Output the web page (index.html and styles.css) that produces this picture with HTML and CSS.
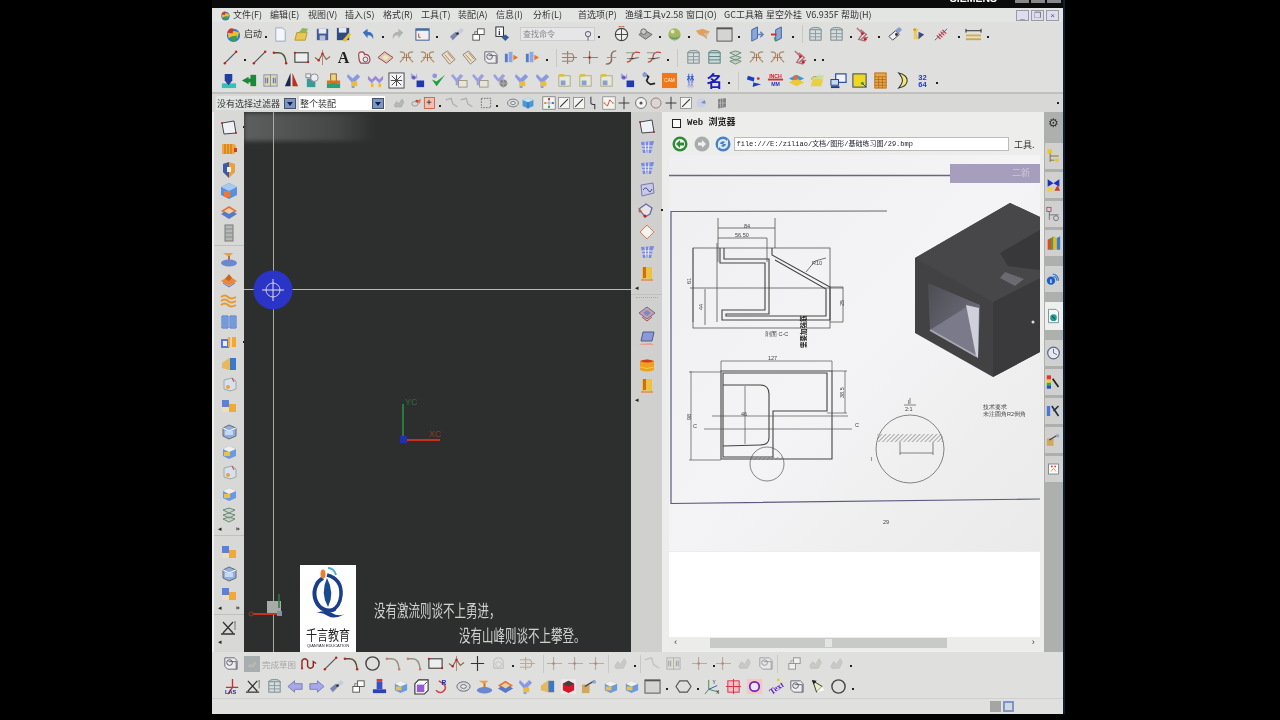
FILE: index.html
```html
<!DOCTYPE html>
<html lang="zh">
<head>
<meta charset="utf-8">
<title>NX</title>
<link rel="stylesheet" href="styles.css">
</head>
<body>
<svg class="defs" xmlns="http://www.w3.org/2000/svg">
<symbol id="nx" viewBox="0 0 18 18"><circle cx="9" cy="10" r="7" fill="#3a78c8"/><path d="M3 8Q8 3 15 7L13 13Q8 9 4 13Z" fill="#e8c030"/><path d="M2 7Q5 1 9 3L8 8Z" fill="#d03828"/><path d="M7 11L13 10 11 16 6 15Z" fill="#40a040"/></symbol>
<symbol id="new" viewBox="0 0 18 18"><path d="M4 2H11L14 5V16H4Z" fill="#f4f6fa" stroke="#9aa8c0"/></symbol>
<symbol id="open" viewBox="0 0 18 18"><path d="M2 15L4 7H15L13 15Z" fill="#e8c850" stroke="#b89830"/><path d="M6 7L10 2 16 3 14 7Z" fill="#8ab860"/></symbol>
<symbol id="save" viewBox="0 0 18 18"><rect x="3" y="3" width="12" height="12" fill="#3f5a9a"/><rect x="5" y="3" width="8" height="5" fill="#e8eaf0"/><rect x="6" y="10" width="6" height="5" fill="#b8c0d0"/></symbol>
<symbol id="saveas" viewBox="0 0 18 18"><rect x="2" y="2" width="13" height="13" fill="#2f4a80"/><rect x="4" y="2" width="8" height="5" fill="#e8eaf0"/><path d="M8 15L15 7 17 9 11 17Z" fill="#e8c030"/></symbol>
<symbol id="undo" viewBox="0 0 18 18"><path d="M3 7L8 3V6Q15 6 14 14Q12 9 8 10V13Z" fill="#3a70c0"/></symbol>
<symbol id="redo" viewBox="0 0 18 18"><path d="M15 7L10 3V6Q3 6 4 14Q6 9 10 10V13Z" fill="#b0b4b0"/></symbol>
<symbol id="win" viewBox="0 0 18 18"><rect x="2" y="3" width="14" height="12" fill="#f0f0f0" stroke="#3a5a90"/><rect x="2" y="3" width="14" height="2" fill="#3a6ab0"/><path d="M5 8V12H7" stroke="#c84020" fill="none"/></symbol>
<symbol id="link" viewBox="0 0 18 18"><path d="M1 11L7 6 10 9 4 15Z" fill="#7888b0"/><path d="M8 6L13 2 16 5 11 9Z" fill="#c8cce0"/><circle cx="9" cy="8" r="1.500" fill="#333"/></symbol>
<symbol id="copies" viewBox="0 0 18 18"><rect x="8" y="3" width="7" height="6" fill="#fff" stroke="#555"/><rect x="3" y="9" width="7" height="6" fill="#fff" stroke="#555"/><path d="M5 9V6H8" stroke="#777" fill="none"/></symbol>
<symbol id="info" viewBox="0 0 18 18"><rect x="2" y="1" width="8" height="10" fill="#fff" stroke="#223"/><text x="4.500" y="9" font-size="8" font-weight="700" fill="#123" font-family="Liberation Serif">i</text><path d="M8 12L12 9 16 12 12 16Z" fill="#3a5a98"/></symbol>
<symbol id="cplus" viewBox="0 0 18 18"><circle cx="9" cy="9" r="6.500" fill="#eee" stroke="#444" stroke-width="1.200"/><path d="M9 3V15M3 9H15" stroke="#444"/><path d="M6 1L9 0 12 1" stroke="#c43" fill="none"/></symbol>
<symbol id="disk" viewBox="0 0 18 18"><path d="M2 9L9 5 16 9 9 14Z" fill="#a8a8a8" stroke="#666"/><circle cx="7" cy="6" r="3" fill="#c8c8c8" stroke="#666"/></symbol>
<symbol id="ball" viewBox="0 0 18 18"><circle cx="9" cy="9" r="6.500" fill="#a8b860"/><path d="M3 10Q9 15 15 10A6.500 6.500 0 0 1 3 10Z" fill="#5a9a78"/><circle cx="7" cy="6" r="2" fill="#e6e8c0"/></symbol>
<symbol id="flag" viewBox="0 0 18 18"><path d="M1 5L8 3 16 6 12 9 13 14 9 11 4 9Z" fill="#e0a060"/><path d="M9 8L15 7 12 12Z" fill="#c8c0a8"/></symbol>
<symbol id="box" viewBox="0 0 18 18"><rect x="1" y="2" width="16" height="14" fill="#d4d4d2" stroke="#555"/><rect x="1" y="2" width="16" height="1.500" fill="#555"/></symbol>
<symbol id="door" viewBox="0 0 18 18"><path d="M4 4L10 1V13L4 16Z" fill="#88a8d8" stroke="#4060a0"/><path d="M10 9L16 9M13 6L16 9 13 12" stroke="#6080b8" stroke-width="1.500" fill="none"/></symbol>
<symbol id="door2" viewBox="0 0 18 18"><path d="M6 4L12 1V13L6 16Z" fill="#88a8d8" stroke="#4060a0"/><path d="M1 9L7 9" stroke="#c83030" stroke-width="2"/><path d="M5 12L6 16" stroke="#30a050" stroke-width="2"/></symbol>
<symbol id="stack" viewBox="0 0 18 18"><ellipse cx="9" cy="4" rx="6" ry="2.500" fill="#c8d0d0" stroke="#7a8a90"/><rect x="3" y="4" width="12" height="11" fill="#d8dcdc" stroke="#7a8a90"/><path d="M3 8H15M3 11.500H15M9 4V15" stroke="#8a9aa0"/></symbol>
<symbol id="stack2" viewBox="0 0 18 18"><ellipse cx="9" cy="4" rx="6" ry="2.500" fill="#b8ccc8" stroke="#5a8080"/><rect x="3" y="4" width="12" height="11" fill="#c8dcd8" stroke="#5a8080"/><path d="M3 8H15M3 11.500H15" stroke="#5a8080"/></symbol>
<symbol id="wave" viewBox="0 0 18 18"><path d="M3 4L9 2 15 4 9 7ZM3 9L9 7 15 9 9 12ZM3 13L9 11 15 13 9 16Z" fill="#c8d4c8" stroke="#6a8a78"/></symbol>
<symbol id="redg" viewBox="0 0 18 18"><path d="M3 2L9 8 5 14 12 16M7 4L13 9 9 13 15 12" stroke="#b0707a" stroke-width="1.500" fill="none"/><circle cx="9" cy="8" r="1.500" fill="#c02030"/><circle cx="12" cy="14" r="1.500" fill="#c02030"/></symbol>
<symbol id="dia" viewBox="0 0 18 18"><path d="M2 11L9 5 13 9 6 15Z" fill="#f0f0f0" stroke="#445"/><path d="M9 4L13 1 16 4 12 8Z" fill="#88a0d8"/><circle cx="10" cy="9" r="1.500" fill="#333"/></symbol>
<symbol id="gold" viewBox="0 0 18 18"><path d="M4 3H9L7 8 10 14H4Z" fill="#e8cc60"/><path d="M9 6L15 9 9 14Z" fill="#3a4a88"/><circle cx="5" cy="4" r="1.500" fill="#d0a020"/></symbol>
<symbol id="spring" viewBox="0 0 18 18"><path d="M2 15L15 3" stroke="#5060a0"/><path d="M4 10L8 14M6 8L10 12M8 6L12 10M10 4L14 8" stroke="#c83040" stroke-width="1.200"/></symbol>
<symbol id="meas" viewBox="0 0 18 18"><path d="M1 5H17M1 3V7M17 3V7" stroke="#223"/><rect x="1" y="9" width="16" height="2" fill="#d8b040"/><rect x="1" y="13" width="16" height="2" fill="#c8a850"/></symbol>
<symbol id="line" viewBox="0 0 18 18"><path d="M3 15L15 3" stroke="#555" stroke-width="1.300"/><circle cx="3" cy="15" r="1.300" fill="#c82020"/><circle cx="15" cy="3" r="1.300" fill="#c82020"/></symbol>
<symbol id="arc" viewBox="0 0 18 18"><path d="M2 4H7Q14 4 15 15" stroke="#553" stroke-width="1.500" fill="none"/><circle cx="2" cy="4" r="1.300" fill="#c82020"/><circle cx="15" cy="15" r="1.300" fill="#c82020"/></symbol>
<symbol id="rect" viewBox="0 0 18 18"><rect x="2" y="4" width="14" height="10" fill="#eee" stroke="#444" stroke-width="1.200"/><circle cx="2" cy="4" r="1.200" fill="#c82020"/><circle cx="16" cy="14" r="1.200" fill="#c82020"/></symbol>
<symbol id="spl" viewBox="0 0 18 18"><path d="M1 9L5 12 9 5 13 11 17 8" stroke="#8a6a50" stroke-width="1.300" fill="none"/><path d="M9 1V17" stroke="#b88070"/><circle cx="9" cy="5" r="1.300" fill="#c82020"/><circle cx="5" cy="12" r="1.300" fill="#c82020"/></symbol>
<symbol id="heart" viewBox="0 0 18 18"><path d="M3 8Q2 3 6 3 9 3 9 6 12 5 14 8 16 12 13 15H5Q3 13 3 8Z" fill="#f0e8e0" stroke="#945" stroke-width="1.200"/><circle cx="10" cy="11" r="2.500" fill="none" stroke="#557"/></symbol>
<symbol id="diab" viewBox="0 0 18 18"><path d="M1 9L8 3 17 9 10 15Z" fill="#d8c8c0" stroke="#a04040"/><path d="M5 9L9 6 13 9 9 12Z" fill="#f0e8b0"/></symbol>
<symbol id="curl" viewBox="0 0 18 18"><path d="M2 3Q8 3 7 7T2 14M16 3Q10 3 11 7T16 14M4 9H14" stroke="#a88a68" stroke-width="1.300" fill="none"/><path d="M9 5V13" stroke="#d06030"/></symbol>
<symbol id="slant" viewBox="0 0 18 18"><path d="M2 6L8 2 16 11 10 16Z" fill="#e8e0d0" stroke="#887"/><path d="M5 6L11 13M8 4L14 11" stroke="#c08050"/></symbol>
<symbol id="dcube" viewBox="0 0 18 18"><path d="M3 3H13L16 6V15H6L3 12Z" fill="#eee" stroke="#667"/><path d="M7 7H15V15" stroke="#667" fill="none"/><circle cx="8" cy="8" r="3" fill="none" stroke="#556"/></symbol>
<symbol id="colr" viewBox="0 0 18 18"><rect x="2" y="5" width="3" height="9" fill="#5878c8"/><rect x="6" y="3" width="4" height="11" fill="#8aa8e8"/><path d="M11 6L16 9 11 12Z" fill="#e87820"/></symbol>
<symbol id="fork" viewBox="0 0 18 18"><path d="M1 5H12Q15 9 12 13H1M1 9H17M7 2V16" stroke="#9a8070" stroke-width="1.200" fill="none"/></symbol>
<symbol id="cross" viewBox="0 0 18 18"><path d="M1 9H17M8 2V16" stroke="#887" stroke-width="1.300"/><circle cx="8" cy="9" r="1.300" fill="#c02020"/></symbol>
<symbol id="jcurve" viewBox="0 0 18 18"><path d="M14 2Q8 2 9 9T3 16" stroke="#8a6a50" stroke-width="1.500" fill="none"/><path d="M4 9H14" stroke="#a88"/></symbol>
<symbol id="redc" viewBox="0 0 18 18"><path d="M3 14Q8 14 9 6 11 2 17 4" stroke="#c84040" stroke-width="1.300" fill="none"/><path d="M2 4H12M3 10Q9 12 16 9" stroke="#8a9a8a"/></symbol>
<symbol id="pin" viewBox="0 0 18 18"><rect x="2" y="12" width="15" height="5" fill="#38c0b8"/><path d="M5 2H13V9L9 14 5 9Z" fill="#20409a"/></symbol>
<symbol id="garrow" viewBox="0 0 18 18"><rect x="10" y="3" width="6" height="12" fill="#1a8a3a"/><path d="M1 9L8 5V13Z" fill="#1a8a3a"/><rect x="6" y="7" width="5" height="4" fill="#1a8a3a"/></symbol>
<symbol id="book" viewBox="0 0 18 18"><rect x="2" y="3" width="7" height="12" fill="#e0dcb0" stroke="#8a90b0"/><rect x="9" y="3" width="7" height="12" fill="#e0dcb0" stroke="#8a90b0"/><path d="M4 6V12M6 6V12M12 6V12M14 6V12" stroke="#5060a8"/></symbol>
<symbol id="sail" viewBox="0 0 18 18"><path d="M8 1V15L2 15Z" fill="#1a2a4a"/><path d="M10 1V15L16 15Z" fill="#c03020"/></symbol>
<symbol id="tcube" viewBox="0 0 18 18"><rect x="3" y="7" width="9" height="9" fill="#3a9a98"/><circle cx="11" cy="6" r="4" fill="#eee" stroke="#889"/><rect x="2" y="2" width="5" height="4" fill="#eee" stroke="#889"/></symbol>
<symbol id="obox" viewBox="0 0 18 18"><rect x="6" y="2" width="6" height="10" fill="#e8d880" stroke="#a06020"/><rect x="2" y="9" width="14" height="3" fill="#d87020"/><rect x="2" y="12" width="14" height="5" fill="#30a070"/></symbol>
<symbol id="vy" viewBox="0 0 18 18"><path d="M2 2L7 7 12 2 15 5 9 11V17H6V11L1 5Z" fill="#8a9ae0"/><rect x="6" y="10" width="6" height="5" fill="#e8c030"/></symbol>
<symbol id="vy2" viewBox="0 0 18 18"><path d="M1 4L5 8 9 4 13 8 17 4V8L13 12 9 8 5 12 1 8Z" fill="#9a8ad8"/><rect x="4" y="12" width="3" height="4" fill="#e8c030"/><rect x="12" y="12" width="3" height="4" fill="#e8c030"/></symbol>
<symbol id="bug" viewBox="0 0 18 18"><rect x="1" y="1" width="16" height="16" fill="#f4f4f4" stroke="#445"/><path d="M4 4L14 14M14 4L4 14M9 3V15M3 9H15" stroke="#444"/></symbol>
<symbol id="vd" viewBox="0 0 18 18"><path d="M2 1L7 5 8 1 9 7H2Z" fill="#a8a0d8"/><rect x="8" y="9" width="8" height="7" fill="#2038b0"/><circle cx="5" cy="6" r="2" fill="#6060c8"/></symbol>
<symbol id="vg" viewBox="0 0 18 18"><path d="M2 8L7 15 16 3 7 10Z" fill="#20a040"/><circle cx="5" cy="4" r="2.500" fill="#8898d8"/></symbol>
<symbol id="vt" viewBox="0 0 18 18"><path d="M2 2L6 7 10 2 13 4 8 10V14H5V10L0 4Z" fill="#9aa0e0"/><rect x="8" y="9" width="9" height="7" fill="#e8e4d8" stroke="#998"/></symbol>
<symbol id="vgr" viewBox="0 0 18 18"><path d="M2 2L6 7 10 2 13 4 8 10H5L0 4Z" fill="#9aa0e0"/><circle cx="11" cy="12" r="4" fill="#888"/><path d="M11 7V17M6 12H16" stroke="#aaa"/></symbol>
<symbol id="sheet" viewBox="0 0 18 18"><rect x="3" y="4" width="12" height="11" fill="#e8e8d8" stroke="#aa8"/><rect x="5" y="9" width="5" height="5" fill="#88a0d0"/><path d="M3 2H9L8 5H3Z" fill="#e0c040"/></symbol>
<symbol id="phone" viewBox="0 0 18 18"><path d="M4 1L9 5 7 9Q8 12 11 13L16 12" stroke="#222" stroke-width="1.800" fill="none"/><circle cx="5" cy="3" r="2.500" fill="#8898d8"/></symbol>
<symbol id="cam" viewBox="0 0 18 18"><rect x="1" y="1" width="16" height="16" fill="#f07818"/><text x="9" y="11" font-size="5" fill="#fff" text-anchor="middle" font-family="Liberation Sans">CAM</text></symbol>
<symbol id="hzb" viewBox="0 0 18 18"><text x="9" y="9" font-size="8" fill="#3a5ac8" font-weight="700" text-anchor="middle" font-family="Noto Sans CJK SC">林</text><text x="9" y="16" font-size="7" fill="#7a8ad8" text-anchor="middle" font-family="Noto Sans CJK SC">林</text></symbol>
<symbol id="ra" viewBox="0 0 18 18"><path d="M2 4L9 6 8 11 16 13 7 16 8 10 1 8Z" fill="#1a40c0"/><circle cx="13" cy="7" r="1.500" fill="#c83030"/></symbol>
<symbol id="inch" viewBox="0 0 18 18"><path d="M1 8H17" stroke="#d03030" stroke-width="2"/><text x="9" y="6" font-size="5.500" fill="#d02020" text-anchor="middle" font-weight="700" font-family="Liberation Sans">INCH</text><text x="9" y="15" font-size="5.500" fill="#2030c0" text-anchor="middle" font-weight="700" font-family="Liberation Sans">MM</text></symbol>
<symbol id="lay" viewBox="0 0 18 18"><path d="M1 7L9 3 17 7 9 11Z" fill="#3a9ae0"/><path d="M1 11L9 7 17 11 9 15Z" fill="#f0c830"/><circle cx="8" cy="6" r="2.500" fill="#e86830"/></symbol>
<symbol id="fold" viewBox="0 0 18 18"><path d="M2 15L4 7H15L13 15Z" fill="#e8d040"/><path d="M6 7L10 3 16 4 14 8Z" fill="#c8e090"/><path d="M2 8L5 5H8" stroke="#a89020" fill="none"/></symbol>
<symbol id="pc" viewBox="0 0 18 18"><rect x="6" y="2" width="11" height="9" fill="#f0f4fa" stroke="#2a50a0" stroke-width="1.300"/><rect x="1" y="8" width="8" height="6" fill="#c8d8f0" stroke="#203a80"/><rect x="1" y="15" width="9" height="2" fill="#203a80"/></symbol>
<symbol id="note" viewBox="0 0 18 18"><rect x="2" y="2" width="14" height="14" fill="#f0d820" stroke="#2a3a80"/><path d="M16 16L12 12" stroke="#2a3a80"/><circle cx="12" cy="12" r="1.500" fill="#18a040"/></symbol>
<symbol id="calc" viewBox="0 0 18 18"><rect x="3" y="1" width="12" height="16" fill="#e8a848" stroke="#c06818"/><path d="M3 5H15M3 8H15M3 11H15M3 14H15M7 5V17M11 5V17" stroke="#a06010" stroke-width=".7"/></symbol>
<symbol id="moon" viewBox="0 0 18 18"><path d="M6 1Q15 3 15 9T6 17Q10 12 10 9T6 1Z" fill="#f0e870" stroke="#333" stroke-width="1.100"/></symbol>
<symbol id="n3264" viewBox="0 0 18 18"><text x="9" y="8" font-size="8" fill="#2040c0" font-weight="700" text-anchor="middle" font-family="Liberation Sans">32</text><text x="9" y="16" font-size="8" fill="#2040c0" font-weight="700" text-anchor="middle" font-family="Liberation Sans">64</text></symbol>
<symbol id="grey" viewBox="0 0 18 18"><path d="M3 12L6 7 9 10 13 4 15 8 12 14H4Z" fill="#b8b8b4" stroke="#a8a8a4"/></symbol>
<symbol id="cone" viewBox="0 0 18 18"><ellipse cx="5" cy="10" rx="4" ry="3" fill="none" stroke="#888"/><path d="M7 6L13 4 11 10Z" fill="#e07050"/><rect x="6" y="5" width="3" height="3" fill="#c84040"/></symbol>
<symbol id="snap" viewBox="0 0 18 18"><path d="M1 5L8 3 10 10 16 14" stroke="#aab0a8" stroke-width="1.500" fill="none"/></symbol>
<symbol id="rsq" viewBox="0 0 18 18"><rect x="3" y="2" width="13" height="14" fill="#f0c0b0" stroke="#c85030"/><path d="M9 5V11M6 8H12" stroke="#302020"/></symbol>
<symbol id="dash" viewBox="0 0 18 18"><rect x="3" y="3" width="12" height="12" fill="none" stroke="#555" stroke-dasharray="2 1.500"/></symbol>
<symbol id="torus" viewBox="0 0 18 18"><ellipse cx="9" cy="9" rx="7" ry="5" fill="#d8dcd8" stroke="#667"/><ellipse cx="9" cy="9" rx="3" ry="2" fill="#eee" stroke="#667"/></symbol>
<symbol id="bcube" viewBox="0 0 18 18"><path d="M9 2L16 5V13L9 16 2 13V5Z" fill="#4898d8"/><path d="M2 5L9 8 16 5 9 2Z" fill="#c8e0f0"/><path d="M9 8V16" stroke="#2060a0"/></symbol>
<symbol id="xf" viewBox="0 0 18 18"><path d="M3 3L13 14M13 3L3 14M1 15H15" stroke="#333" stroke-width="1.300"/><path d="M15 3V11M16 3H14" stroke="#777"/></symbol>
<symbol id="lnb" viewBox="0 0 18 18"><rect x="2" y="2" width="14" height="14" fill="#f4f4f2" stroke="#888"/><path d="M4 14L14 4" stroke="#333" stroke-width="1.300"/></symbol>
<symbol id="zig" viewBox="0 0 18 18"><rect x="1" y="1" width="16" height="16" fill="#f4f4f2" stroke="#888"/><path d="M3 9L7 13 10 5 14 9" stroke="#c02020" fill="none"/><circle cx="3" cy="9" r="1.200" fill="#e0a020"/><circle cx="14" cy="9" r="1.200" fill="#e0a020"/></symbol>
<symbol id="dots" viewBox="0 0 18 18"><rect x="1" y="1" width="16" height="16" fill="#f4f4f2" stroke="#777"/><path d="M9 3V15M3 9H15" stroke="#999"/><circle cx="9" cy="4" r="1.400" fill="#c02020"/><circle cx="4" cy="9" r="1.400" fill="#d09020"/><circle cx="14" cy="9" r="1.400" fill="#2070c0"/><circle cx="9" cy="14" r="1.400" fill="#20a040"/></symbol>
<symbol id="sc" viewBox="0 0 18 18"><path d="M5 1V9Q5 11 10 11V17" stroke="#334" stroke-width="1.300" fill="none"/></symbol>
<symbol id="tcr" viewBox="0 0 18 18"><path d="M9 1V17M2 9H16" stroke="#333" stroke-width="1.200"/></symbol>
<symbol id="target" viewBox="0 0 18 18"><circle cx="9" cy="9" r="7" fill="#f4f4f2" stroke="#555"/><circle cx="9" cy="9" r="2" fill="#555"/></symbol>
<symbol id="ring" viewBox="0 0 18 18"><circle cx="9" cy="9" r="6.500" fill="none" stroke="#a06060"/></symbol>
<symbol id="ringb" viewBox="0 0 18 18"><circle cx="9" cy="9" r="7" fill="none" stroke="#444" stroke-width="1.500"/></symbol>
<symbol id="grip" viewBox="0 0 18 18"><path d="M4 4L14 3V14L4 16Z" fill="#808080"/><path d="M7 4V15M10 3.500V15M4 9H14" stroke="#bbb"/></symbol>
<symbol id="tin" viewBox="0 0 18 18"><circle cx="9" cy="9" r="6" fill="#c8d0e8"/><path d="M9 9L14 5 15 10Z" fill="#7a8ac8"/></symbol>
<symbol id="obook" viewBox="0 0 18 18"><path d="M2 4H14L16 6V12L14 14H2Z" fill="#f0a838"/><path d="M5 4V14M8 4V14M11 4V14" stroke="#c86818"/><path d="M14 8H17V12H14Z" fill="#d04020"/></symbol>
<symbol id="shield" viewBox="0 0 18 18"><path d="M3 3L9 1 15 3V11L9 17 3 11Z" fill="#e8a040"/><path d="M3 3L9 1V17L3 11Z" fill="#3a5ab0"/><path d="M7 6H11V11H7Z" fill="#f4f0e0"/></symbol>
<symbol id="ocube" viewBox="0 0 18 18"><path d="M9 1L17 5V13L9 17 1 13V5Z" fill="#5a90d8"/><path d="M1 5L9 1 17 5 9 9Z" fill="#a8c8f0"/><rect x="4" y="9" width="6" height="6" fill="#f07830"/></symbol>
<symbol id="olay" viewBox="0 0 18 18"><path d="M1 8L9 3 17 8 9 13Z" fill="#e87030"/><path d="M1 11L9 6 17 11 9 16Z" fill="#5a78c8"/><path d="M4 8L9 5 14 8 9 11Z" fill="#e8d0a0"/></symbol>
<symbol id="tower" viewBox="0 0 18 18"><rect x="5" y="1" width="8" height="16" fill="#b4b8b8" stroke="#7a7a7a"/><path d="M5 5H13M5 9H13M5 13H13" stroke="#8a8a8a"/></symbol>
<symbol id="ped" viewBox="0 0 18 18"><path d="M3 3H13L9 7Z" fill="#e8a040"/><rect x="8" y="6" width="2" height="5" fill="#c87020"/><ellipse cx="9" cy="13" rx="8" ry="3.500" fill="#6a88d0"/></symbol>
<symbol id="odia" viewBox="0 0 18 18"><path d="M1 10L9 5 17 10 9 15Z" fill="#e88838"/><path d="M5 8L9 3 12 7 9 10Z" fill="#c86818"/><path d="M3 12L9 16 15 12" stroke="#5a78c8" fill="none"/></symbol>
<symbol id="otext" viewBox="0 0 18 18"><path d="M1 5Q5 2 8 5T16 5M1 9Q5 6 8 9T16 9M1 13Q5 10 8 13T16 13" stroke="#e89830" stroke-width="2" fill="none"/></symbol>
<symbol id="bbook" viewBox="0 0 18 18"><path d="M2 3H8V15H2ZM10 3H16V15H10Z" fill="#a8c4ec" stroke="#4070c8"/><path d="M4 4V14M6 4V14M12 4V14M14 4V14" stroke="#4070c8"/></symbol>
<symbol id="bob" viewBox="0 0 18 18"><rect x="1" y="5" width="8" height="9" fill="#5a78d8"/><rect x="8" y="3" width="8" height="10" fill="#f0a838"/><rect x="3" y="7" width="4" height="5" fill="#eee"/><path d="M11 3V13" stroke="#fff"/></symbol>
<symbol id="bgb" viewBox="0 0 18 18"><path d="M2 8L9 3H16V15H9L2 13Z" fill="#e8b860"/><rect x="10" y="3" width="6" height="12" fill="#3a78c8"/></symbol>
<symbol id="mug" viewBox="0 0 18 18"><path d="M4 4L12 2 16 5 16 13 10 15 4 13Z" fill="#d8e0ec" stroke="#9aa"/><circle cx="8" cy="11" r="2" fill="#e8a040"/><path d="M12 2L14 6" stroke="#c04040"/></symbol>
<symbol id="bchk" viewBox="0 0 18 18"><rect x="2" y="3" width="7" height="7" fill="#5a80d8"/><rect x="9" y="7" width="7" height="8" fill="#f0a838"/><rect x="2" y="10" width="7" height="5" fill="#e8e0c0"/></symbol>
<symbol id="mwin" viewBox="0 0 18 18"><path d="M3 6L9 3 16 6V14L9 17 3 14Z" fill="#8fb0e0" stroke="#6a6a70"/><path d="M3 6L9 9 16 6" stroke="#fff" fill="none"/><rect x="5" y="9" width="8" height="4" fill="#c8d8f0"/></symbol>
<symbol id="scube" viewBox="0 0 18 18"><path d="M3 6L9 3 16 6V13L9 16 3 13Z" fill="#6a9ae0"/><path d="M3 6L9 3 16 6 9 9Z" fill="#f0f0e8"/><rect x="4" y="9" width="6" height="4" fill="#f0c040"/></symbol>
<symbol id="sq2" viewBox="0 0 18 18"><path d="M2 4L14 2 16 14 4 15Z" fill="#eff1f4" stroke="#445"/><circle cx="2" cy="4" r="1" fill="#c02020"/><circle cx="16" cy="14" r="1" fill="#c02020"/></symbol>
<symbol id="pg" viewBox="0 0 18 18"><path d="M3 3L16 2 13 14 5 14Z" fill="#7a8ad8"/><path d="M7 2.500L8 14M11 2.500L10 14M3.500 7H15M4 10H14" stroke="#e8eaf8"/></symbol>
<symbol id="bsq" viewBox="0 0 18 18"><path d="M3 4L15 2 16 12 4 15Z" fill="#c8c8e8" stroke="#7a7ab0"/><path d="M5 9Q8 5 10 9T14 8" stroke="#4a4a90" fill="none"/></symbol>
<symbol id="rbox" viewBox="0 0 18 18"><path d="M1 7L8 2 14 6 12 12 7 15Z" fill="#e8e4e0" stroke="#6a6ab0" stroke-width="1.300"/><circle cx="2" cy="9" r="1.500" fill="#d06020"/><circle cx="7" cy="14" r="1.500" fill="#c02020"/></symbol>
<symbol id="rdia" viewBox="0 0 18 18"><path d="M9 2L16 9 9 16 2 9Z" fill="#f0e8e0" stroke="#d08060"/><circle cx="9" cy="9" r="4" fill="#f4f4ee"/></symbol>
<symbol id="ygold" viewBox="0 0 18 18"><path d="M4 2H14V15L9 13 4 15Z" fill="#f0c040"/><path d="M5 2H8V13H5Z" fill="#c87020"/><path d="M3 15H15" stroke="#e86820"/></symbol>
<symbol id="pdia" viewBox="0 0 18 18"><path d="M1 9L9 3 17 9 9 15Z" fill="#c8a0a8" stroke="#6a6a90"/><path d="M5 9L9 6 13 9 9 12Z" fill="#7a8ac8"/><path d="M4 13L9 17 14 13" stroke="#c84040" fill="none"/></symbol>
<symbol id="pc2" viewBox="0 0 18 18"><path d="M5 2H16L14 11H3Z" fill="#8a9ad8" stroke="#505a90"/><path d="M1 14L13 13 16 15H3Z" fill="#e8a090"/></symbol>
<symbol id="ocyl" viewBox="0 0 18 18"><path d="M2 5Q9 2 16 5V14Q9 17 2 14Z" fill="#f0a020"/><path d="M2 5Q9 2 16 5 9 8 2 5Z" fill="#c84020"/><path d="M2 11Q9 14 16 11" stroke="#e8d040" fill="none"/></symbol>
<symbol id="larrow" viewBox="0 0 18 18"><path d="M1 9L8 3V6H16V12H8V15Z" fill="#a8a8e8" stroke="#7a7ac8"/></symbol>
<symbol id="rarrow" viewBox="0 0 18 18"><path d="M17 9L10 3V6H2V12H10V15Z" fill="#a8a8e8" stroke="#7a7ac8"/></symbol>
<symbol id="stamp" viewBox="0 0 18 18"><rect x="6" y="1" width="6" height="3" fill="#c84030"/><rect x="6" y="4" width="6" height="8" fill="#3a50c0"/><rect x="2" y="12" width="14" height="4" fill="#3040b0"/></symbol>
<symbol id="pcube" viewBox="0 0 18 18"><path d="M6 2H16V13L12 17H2V6Z" fill="#fff" stroke="#333" stroke-width="1.200"/><path d="M4 7H12V15H4Z" fill="#9a5ad8"/><path d="M12 7L15 4" stroke="#333"/></symbol>
<symbol id="rcurve" viewBox="0 0 18 18"><path d="M5 3Q15 8 11 13T2 13" stroke="#d04040" stroke-width="1.500" fill="none"/><text x="8" y="7" font-size="7" font-weight="700" fill="#2030b0" font-family="Liberation Sans">R</text></symbol>
<symbol id="rcube" viewBox="0 0 18 18"><rect x="1" y="1" width="16" height="16" fill="#ece8e8"/><path d="M9 3L15 6V13L9 16 3 13V6Z" fill="#d81828"/><path d="M3 6L9 3 15 6 9 9Z" fill="#404040"/></symbol>
<symbol id="axes" viewBox="0 0 18 18"><path d="M5 2V12L16 15M5 12L1 17" stroke="#3a8a4a" fill="none"/><path d="M5 12L14 8" stroke="#3050c0"/><text x="9" y="6" font-size="5" fill="#223" font-family="Liberation Sans">Y</text><text x="13" y="17" font-size="5" fill="#223" font-family="Liberation Sans">X</text></symbol>
<symbol id="rgrid" viewBox="0 0 18 18"><rect x="3" y="3" width="12" height="12" fill="#f4c0c8" stroke="#d83040"/><path d="M9 1V17M1 9H17" stroke="#d83040"/></symbol>
<symbol id="psq" viewBox="0 0 18 18"><rect x="1" y="1" width="16" height="16" fill="#f4c8c0"/><circle cx="9" cy="9" r="5" fill="#f0e8f4" stroke="#6a20c0" stroke-width="1.800"/></symbol>
<symbol id="textic" viewBox="0 0 18 18"><text x="9" y="14" font-size="9" font-weight="700" fill="#5a20b8" text-anchor="middle" font-family="Liberation Serif" transform="rotate(-35 9 9)">Text</text><circle cx="12" cy="2" r="1.500" fill="#e0d030"/></symbol>
<symbol id="spot" viewBox="0 0 18 18"><path d="M4 3L14 9 8 15Z" fill="#e8f0c0" stroke="#333"/><path d="M3 2L8 3 5 7Z" fill="#222"/><path d="M14 9L16 13 8 15Z" fill="#fff"/></symbol>
<symbol id="hex" viewBox="0 0 18 18"><path d="M5 3H13L17 9 13 15H5L1 9Z" fill="none" stroke="#555" stroke-width="1.200"/></symbol>
<symbol id="lasb" viewBox="0 0 18 18"><path d="M9 1V10M2 10H15M9 10L4 17" stroke="#c83030" stroke-width="1.400"/><text x="1" y="17" font-size="6" font-weight="700" fill="#203080" font-family="Liberation Sans">LAS</text></symbol>
<symbol id="ws" viewBox="0 0 18 18"><path d="M1 13V6Q4 2 7 6V12Q10 16 13 12V7L16 9" stroke="#8a2a20" stroke-width="1.500" fill="none"/><circle cx="1" cy="14" r="1.300" fill="#c82020"/></symbol>
<symbol id="heartg" viewBox="0 0 18 18"><path d="M4 14V8Q4 3 9 3T14 8V14Z" fill="none" stroke="#999"/><circle cx="9" cy="10" r="3" fill="none" stroke="#aaa"/></symbol>
<symbol id="tabA" viewBox="0 0 18 18"><rect x="2" y="1" width="5" height="5" fill="#e8c820"/><path d="M5 6V16M5 9H15M5 14H10" stroke="#806020"/><rect x="11" y="12" width="4" height="4" fill="#e8c820"/></symbol>
<symbol id="tabB" viewBox="0 0 18 18"><path d="M2 2L9 7 16 2V11L9 7 2 11Z" fill="#1a30c0"/><rect x="2" y="12" width="6" height="5" fill="#f0d040"/><path d="M10 16L14 9 17 16Z" fill="#c84030"/></symbol>
<symbol id="tabC" viewBox="0 0 18 18"><rect x="1" y="1" width="5" height="5" fill="none" stroke="#b04070"/><path d="M4 6V16M4 10H15" stroke="#667"/><circle cx="12" cy="14" r="3" fill="none" stroke="#667"/></symbol>
<symbol id="tabD" viewBox="0 0 18 18"><path d="M2 5L6 3V17H2Z" fill="#e84820"/><path d="M6 3L9 1V17H6Z" fill="#38a850"/><path d="M9 1L13 3V17H9Z" fill="#f0b020"/><path d="M13 3L17 1V17H13Z" fill="#3080d0"/></symbol>
<symbol id="tabE" viewBox="0 0 18 18"><circle cx="6" cy="11" r="5" fill="#1a60c8"/><text x="6" y="14" font-size="8" fill="#fff" text-anchor="middle" font-weight="700" font-family="Liberation Serif">i</text><path d="M8 3Q15 4 15 11M9 6Q13 6 13 11" stroke="#3070c8" stroke-width="1.300" fill="none"/></symbol>
<symbol id="tabF" viewBox="0 0 18 18"><path d="M3 1H12L15 4V17H3Z" fill="#f4f8f8" stroke="#708090"/><circle cx="9" cy="11" r="4" fill="#20a090"/><path d="M7 9L11 13" stroke="#123"/></symbol>
<symbol id="tabG" viewBox="0 0 18 18"><circle cx="9" cy="9" r="7" fill="#e4e8f0" stroke="#5a6a8a" stroke-width="1.500"/><path d="M9 4V9L13 11" stroke="#6a5a50" fill="none"/></symbol>
<symbol id="tabH" viewBox="0 0 18 18"><rect x="1" y="1" width="5" height="5" fill="#e83030"/><rect x="1" y="6" width="5" height="4" fill="#f0d020"/><rect x="1" y="10" width="5" height="3" fill="#30b040"/><rect x="1" y="13" width="5" height="4" fill="#2050d0"/><path d="M8 5L15 15" stroke="#222" stroke-width="2"/></symbol>
<symbol id="tabI" viewBox="0 0 18 18"><rect x="1" y="3" width="4" height="12" fill="#4a78d8"/><path d="M7 3L15 15M15 3L9 9" stroke="#234" stroke-width="2"/></symbol>
<symbol id="tabJ" viewBox="0 0 18 18"><rect x="1" y="7" width="8" height="9" fill="#d0a860"/><path d="M4 9L14 3" stroke="#445" stroke-width="1.500"/><circle cx="14" cy="4" r="2" fill="#88aacc"/></symbol>
<symbol id="tabK" viewBox="0 0 18 18"><rect x="3" y="3" width="12" height="12" fill="#fff" stroke="#778"/><rect x="6" y="5" width="2" height="2" fill="#d04040"/><rect x="10" y="5" width="2" height="2" fill="#d04040"/><path d="M6 12L9 8 12 12" stroke="#d09030" fill="none"/></symbol>
</svg>

<div class="app">
  <header class="topbar"><span class="brand">SIEMENS</span><span class="tbtn"></span><span class="tbtn"></span><span class="tbtn"></span></header>

  <nav class="menu">
    <svg class="mlogo"><use href="#nx"/></svg>
    <span class="mi w37">文件(F)</span><span class="mi w38">编辑(E)</span><span class="mi w37">视图(V)</span><span class="mi w38">插入(S)</span><span class="mi w38">格式(R)</span><span class="mi w37">工具(T)</span><span class="mi w38">装配(A)</span><span class="mi w37">信息(I)</span><span class="mi w45">分析(L)</span><span class="mi w47">首选项(P)</span><span class="mi w61">渔缝工具v2.58</span><span class="mi w38">窗口(O)</span><span class="mi w42">GC工具箱</span><span class="mi w39">星空外挂</span><span class="mi w35">V6.935F</span><span class="mi">帮助(H)</span>
    <span class="winbtns"><b>_</b><b>❐</b><b>×</b></span>
  </nav>

  <div class="tb r1">
    <i class="t"><svg><use href="#nx"/></svg></i><span class="lbl">启动</span><i class="d"></i>
    <i class="t"><svg><use href="#new"/></svg></i><i class="t"><svg><use href="#open"/></svg></i><i class="t"><svg><use href="#save"/></svg></i><i class="t"><svg><use href="#saveas"/></svg></i>
    <i class="t m4"><svg><use href="#undo"/></svg></i><i class="d"></i><i class="t"><svg><use href="#redo"/></svg></i>
    <i class="t m4"><svg><use href="#win"/></svg></i><i class="d"></i>
    <i class="t m6"><svg><use href="#link"/></svg></i><i class="t"><svg><use href="#copies"/></svg></i><i class="t m3"><svg><use href="#info"/></svg></i>
    <span class="search">查找命令<em>⚲</em></span><i class="d"></i>
    <i class="t m8"><svg><use href="#cplus"/></svg></i><i class="t m3"><svg><use href="#disk"/></svg></i><i class="d"></i>
    <i class="t"><svg><use href="#ball"/></svg></i><i class="d"></i><i class="t"><svg><use href="#flag"/></svg></i>
    <i class="t"><svg><use href="#box"/></svg></i><i class="d"></i>
    <i class="t m3"><svg><use href="#door"/></svg></i><i class="t m1"><svg><use href="#door2"/></svg></i><i class="d"></i><i class="sep"></i>
    <i class="t n3"><svg><use href="#stack"/></svg></i><i class="t"><svg><use href="#stack"/></svg></i><i class="d"></i>
    <i class="t n3"><svg><use href="#redg"/></svg></i><i class="d m2"></i>
    <i class="t m2"><svg><use href="#dia"/></svg></i><i class="t m2"><svg><use href="#gold"/></svg></i><i class="t m2"><svg><use href="#spring"/></svg></i><i class="d m3"></i>
    <i class="t"><svg><use href="#meas"/></svg></i><i class="d"></i>
  </div>

  <div class="tb r2">
    <i class="t"><svg><use href="#line"/></svg></i><i class="d"></i>
    <i class="t"><svg><use href="#line"/></svg></i><i class="t"><svg><use href="#arc"/></svg></i><i class="t"><svg><use href="#rect"/></svg></i><i class="t"><svg><use href="#spl"/></svg></i>
    <i class="t a">A</i>
    <i class="t"><svg><use href="#heart"/></svg></i><i class="t"><svg><use href="#diab"/></svg></i><i class="t"><svg><use href="#curl"/></svg></i><i class="t"><svg><use href="#curl"/></svg></i><i class="t"><svg><use href="#slant"/></svg></i><i class="t"><svg><use href="#slant"/></svg></i><i class="t"><svg><use href="#dcube"/></svg></i><i class="t"><svg><use href="#colr"/></svg></i><i class="t"><svg><use href="#colr"/></svg></i>
    <i class="d"></i><i class="sep"></i>
    <i class="t n3"><svg><use href="#fork"/></svg></i><i class="t"><svg><use href="#cross"/></svg></i><i class="t"><svg><use href="#jcurve"/></svg></i><i class="t"><svg><use href="#redc"/></svg></i><i class="t"><svg><use href="#redc"/></svg></i><i class="d"></i><i class="sep"></i>
    <i class="t"><svg><use href="#stack"/></svg></i><i class="t"><svg><use href="#stack2"/></svg></i><i class="t"><svg><use href="#wave"/></svg></i><i class="t"><svg><use href="#curl"/></svg></i><i class="t"><svg><use href="#curl"/></svg></i><i class="t m2"><svg><use href="#redg"/></svg></i><i class="d"></i><i class="d"></i>
  </div>

  <div class="tb r3">
    <i class="t"><svg><use href="#pin"/></svg></i><i class="t"><svg><use href="#garrow"/></svg></i><i class="t"><svg><use href="#book"/></svg></i><i class="t"><svg><use href="#sail"/></svg></i><i class="t"><svg><use href="#tcube"/></svg></i><i class="t"><svg><use href="#obox"/></svg></i><i class="t"><svg><use href="#vy"/></svg></i><i class="t"><svg><use href="#vy2"/></svg></i><i class="t"><svg><use href="#bug"/></svg></i><i class="t"><svg><use href="#vd"/></svg></i><i class="t"><svg><use href="#vg"/></svg></i><i class="t"><svg><use href="#vt"/></svg></i><i class="t"><svg><use href="#vt"/></svg></i><i class="t"><svg><use href="#vgr"/></svg></i><i class="t"><svg><use href="#vy"/></svg></i><i class="t"><svg><use href="#vy"/></svg></i><i class="t"><svg><use href="#sheet"/></svg></i><i class="t"><svg><use href="#sheet"/></svg></i><i class="t"><svg><use href="#sheet"/></svg></i><i class="t"><svg><use href="#vd"/></svg></i><i class="t"><svg><use href="#phone"/></svg></i><i class="t"><svg><use href="#cam"/></svg></i><i class="t"><svg><use href="#hzb"/></svg></i><i class="t ming">名</i>
    <i class="d"></i><i class="sep"></i>
    <i class="t"><svg><use href="#ra"/></svg></i><i class="t"><svg><use href="#inch"/></svg></i><i class="t"><svg><use href="#lay"/></svg></i><i class="t"><svg><use href="#fold"/></svg></i><i class="t"><svg><use href="#pc"/></svg></i><i class="t"><svg><use href="#note"/></svg></i><i class="t"><svg><use href="#calc"/></svg></i><i class="t"><svg><use href="#moon"/></svg></i><i class="t"><svg><use href="#n3264"/></svg></i><i class="d"></i>
  </div>

  <div class="sel">
    <span class="dd w80"><span>没有选择过滤器</span><em></em></span>
    <span class="dd w86"><span>整个装配</span><em></em></span>
    <i class="s m6"><svg><use href="#grey"/></svg></i>
    <i class="s m4"><svg><use href="#cone"/></svg></i><i class="s n4"><svg><use href="#rsq"/></svg></i><i class="d"></i><i class="s"><svg><use href="#snap"/></svg></i><i class="s"><svg><use href="#snap"/></svg></i>
    <i class="s m4"><svg><use href="#dash"/></svg></i><i class="d"></i><i class="s m4"><svg><use href="#torus"/></svg></i><i class="s"><svg><use href="#bcube"/></svg></i>
    <i class="s m6"><svg><use href="#dots"/></svg></i><i class="s"><svg><use href="#lnb"/></svg></i><i class="s"><svg><use href="#lnb"/></svg></i><i class="s"><svg><use href="#sc"/></svg></i><i class="s"><svg><use href="#zig"/></svg></i><i class="s"><svg><use href="#tcr"/></svg></i><i class="s m2"><svg><use href="#target"/></svg></i><i class="s"><svg><use href="#ring"/></svg></i><i class="s"><svg><use href="#tcr"/></svg></i><i class="s"><svg><use href="#lnb"/></svg></i><i class="s"><svg><use href="#tin"/></svg></i>
    <i class="s m6"><svg><use href="#grip"/></svg></i>
    <i class="endd"></i>
  </div>

  <main class="main">
    <aside class="lrail">
      <i class="l"><svg><use href="#sq2"/></svg><u></u></i>
      <i class="l"><svg><use href="#obook"/></svg></i><i class="l"><svg><use href="#shield"/></svg></i><i class="l"><svg><use href="#ocube"/></svg></i><i class="l"><svg><use href="#olay"/></svg></i><i class="l"><svg><use href="#tower"/></svg></i>
      <hr>
      <i class="l"><svg><use href="#ped"/></svg></i><i class="l"><svg><use href="#odia"/></svg></i><i class="l"><svg><use href="#otext"/></svg></i><i class="l"><svg><use href="#bbook"/></svg></i><i class="l"><svg><use href="#bob"/></svg><u></u></i><i class="l"><svg><use href="#bgb"/></svg></i><i class="l"><svg><use href="#mug"/></svg></i><i class="l"><svg><use href="#bchk"/></svg></i><i class="l g4"><svg><use href="#mwin"/></svg></i><i class="l"><svg><use href="#scube"/></svg></i><i class="l"><svg><use href="#mug"/></svg></i><i class="l"><svg><use href="#scube"/></svg></i><i class="l"><svg><use href="#wave"/></svg></i>
      <p class="more"><span>◂</span><span>»</span></p><hr>
      <i class="l g2"><svg><use href="#bchk"/></svg></i><i class="l"><svg><use href="#mwin"/></svg></i><i class="l"><svg><use href="#bchk"/></svg></i>
      <p class="more"><span>◂</span><span>»</span></p><hr>
      <i class="l"><svg><use href="#xf"/></svg></i>
      <p class="more"><span>◂</span></p>
    </aside>

    <section class="view">
      <div class="blurbox"></div>
      <div class="vline"></div>
      <div class="hline"></div>
      <div class="dotmark"><svg viewBox="0 0 40 40"><circle cx="20" cy="20" r="19.500" fill="#2a35c8"/><circle cx="20" cy="20" r="7" fill="none" stroke="#c8ccd8"/><path d="M20 9V31M9 20H31" stroke="#e0e0e0"/></svg></div>
      <div class="wcs"><svg viewBox="0 0 50 50"><path d="M9 6V42" stroke="#2a7a3a" stroke-width="2"/><path d="M9 42H46" stroke="#c83020" stroke-width="2"/><rect x="6" y="38" width="7" height="7" fill="#2030b0"/><text x="11" y="7" font-size="9" fill="#2f6a3c" font-family="Liberation Sans">YC</text><text x="35" y="39" font-size="9" fill="#8a3a2c" font-family="Liberation Sans">XC</text></svg></div>
      <div class="abs"><svg viewBox="0 0 40 36"><rect x="19" y="7" width="14" height="14" fill="#a8aca8"/><path d="M31 0V14" stroke="#2a7a3a" stroke-width="1.500"/><path d="M5 20H30" stroke="#c83020" stroke-width="2"/><circle cx="3" cy="20" r="2" fill="none" stroke="#842"/><rect x="29" y="17" width="5" height="5" fill="#8090b0"/></svg></div>
      <figure class="logo">
        <svg viewBox="0 0 56 60"><path d="M23 13A14.500 17 0 1 0 35 44" fill="none" stroke="#1a3f8a" stroke-width="4"/><path d="M27 10Q42 14 41 30 40 42 31 46" fill="none" stroke="#1a3f8a" stroke-width="3.500"/><path d="M27 13Q20 28 28 42 35 28 27 13Z" fill="#1a4a90"/><ellipse cx="23" cy="9" rx="2.500" ry="4.500" fill="#e88030"/><path d="M28 3Q34 3 36 10" fill="none" stroke="#4ab0d0" stroke-width="2"/><path d="M16 48Q26 44 32 48T45 49Q34 55 28 51T16 48Z" fill="#1a3f8a"/></svg>
        <figcaption><span class="ln">千言教育</span><span class="le">QIANYAN EDUCATION</span></figcaption>
      </figure>
      <p class="motto m1l">没有激流则谈不上勇进，</p>
      <p class="motto m2l">没有山峰则谈不上攀登。</p>
    </section>

    <aside class="mrail">
      <i class="l"><svg><use href="#sq2"/></svg></i><i class="l"><svg><use href="#pg"/></svg></i><i class="l"><svg><use href="#pg"/></svg></i><i class="l"><svg><use href="#bsq"/></svg></i><i class="l"><svg><use href="#rbox"/></svg><u></u></i><i class="l"><svg><use href="#rdia"/></svg></i><i class="l"><svg><use href="#pg"/></svg></i><i class="l"><svg><use href="#ygold"/></svg></i>
      <p class="more"><span>◂</span></p><hr><p class="grips"></p>
      <i class="l g5"><svg><use href="#pdia"/></svg></i><i class="l g5"><svg><use href="#pc2"/></svg></i><i class="l"><svg><use href="#ocyl"/></svg></i><i class="l"><svg><use href="#ygold"/></svg></i>
      <p class="more"><span>◂</span></p>
    </aside>

    <section class="browser">
      <div class="bhead"><span class="chk"></span><span class="btitle">Web 浏览器</span></div>
      <div class="bnav">
        <svg class="nb" viewBox="0 0 16 16"><circle cx="8" cy="8" r="7.500" fill="#2f8a38"/><circle cx="8" cy="8" r="5" fill="#f4f8f0"/><path d="M4 8L8 4V6.500H12V9.500H8V12Z" fill="#2f8a38"/></svg>
        <svg class="nb" viewBox="0 0 16 16"><circle cx="8" cy="8" r="7.500" fill="#a8acaa"/><path d="M12 8L8 4V6.500H4V9.500H8V12Z" fill="#f0f0f0"/></svg>
        <svg class="nb" viewBox="0 0 16 16"><circle cx="8" cy="8" r="7.500" fill="#4a80c8"/><path d="M3 8A5 5 0 0 1 12 5L13 3V8H8L10 6A3 3 0 0 0 5 8ZM13 8A5 5 0 0 1 4 11L3 13V8H8L6 10A3 3 0 0 0 11 8Z" fill="#dceaf8"/></svg>
        <span class="url">file:///E:/ziliao/文档/图形/基础练习图/29.bmp</span>
        <span class="btools">工具<u>.</u></span>
      </div>
      <div class="pic">
        <svg viewBox="669 155 371 396">
          <defs>
            <linearGradient id="paper" x1="0" y1="0" x2="1" y2="1"><stop offset="0" stop-color="#efeef0"/><stop offset=".5" stop-color="#f4f3f5"/><stop offset="1" stop-color="#eaeaea"/></linearGradient>
            <linearGradient id="cav" x1="0" y1="0" x2="1" y2="1"><stop offset="0" stop-color="#4c4c52"/><stop offset=".7" stop-color="#6c6c7a"/><stop offset="1" stop-color="#a0a0b0"/></linearGradient>
            <pattern id="hat" width="3" height="3" patternUnits="userSpaceOnUse" patternTransform="rotate(45)"><path d="M0 0V3" stroke="#666" stroke-width="1"/></pattern>
          </defs>
          <rect x="669" y="155" width="371" height="396" fill="url(#paper)"/>
          <rect x="950" y="164" width="90" height="19" fill="#a79dbc"/>
          <text x="1012" y="176" font-size="9" fill="#cfc8da" font-family="Noto Sans CJK SC">二新</text>
          <path d="M669 175.500H950" stroke="#6a6488" stroke-width="1.500"/>
          <path d="M671 211.500L887 211" stroke="#666" stroke-width="1"/>
          <path d="M671 211V503.500L1040 499" fill="none" stroke="#5a5a80" stroke-width="1.200"/>

          <g fill="none" stroke="#555" stroke-width=".8">
            <rect x="693" y="248" width="137" height="80"/>
            <path d="M690 288H843"/>
            <path d="M718 218V262M775 218V248M718 228H775M718 238H767M767 238V262"/>
            <path d="M693 248V322M705 289V325M717 243V322M843 287V322M830 287H843M830 322H843"/>
          </g>
          <g fill="none" stroke="#444" stroke-width="1.100">
            <path d="M720 248V263H765V310H722V320H830V287L772 255V248"/>
            <path d="M724 248V259H769V314H726V316H826V289L775 260"/>
          </g>
          <path d="M806 272L815 261 826 258" fill="none" stroke="#555" stroke-width=".8"/>
          <g font-family="Liberation Sans" fill="#444" font-size="5.500">
            <text x="744" y="228">84</text><text x="735" y="237">56.50</text><text x="765" y="336">剖面 C-C</text><text x="812" y="265">R10</text><text x="691" y="284" transform="rotate(-90 691 284)">61</text><text x="703" y="310" transform="rotate(-90 703 310)">44</text><text x="844" y="306" transform="rotate(-90 844 306)">25</text>
            <text x="806" y="348" transform="rotate(-90 806 348)" font-size="6.500" font-weight="700" font-family="Noto Sans CJK SC" fill="#222">需要加强筋</text>
          </g>

          <g fill="none" stroke="#444" stroke-width="1.100">
            <path d="M721 371H832V459H721Z"/>
            <path d="M723 373H827V411H773V457H723Z"/>
            <path d="M723 385H760Q769 385 769 394V438Q769 445 760 445L723 446"/>
          </g>
          <g fill="none" stroke="#555" stroke-width=".7">
            <path d="M691 371V460M689 372H721M689 460H721M721 361H832M721 361V371M832 361V371M845 371V413M832 371H847M827 413H847M745 386V444M712 416H848M704 429H852"/>
            <circle cx="767" cy="464" r="17"/><circle cx="910" cy="449" r="34"/>
            <path d="M904 405H916M910 398V404M900 442V455M933 442V455M900 453H933"/>
          </g>
          <rect x="877" y="434" width="66" height="8" fill="url(#hat)"/>
          <rect x="750" y="457" width="34" height="3" fill="url(#hat)"/>
          <g font-family="Liberation Sans" fill="#444" font-size="5.500">
            <text x="768" y="360">127</text><text x="691" y="420" transform="rotate(-90 691 420)">98</text><text x="844" y="398" transform="rotate(-90 844 398)">38.5</text><text x="693" y="428">C</text><text x="855" y="427">C</text><text x="741" y="416">46</text><text x="871" y="461">I</text><text x="908" y="404">I</text><text x="905" y="411">2:1</text><text x="883" y="524">29</text><text x="983" y="409">技术要求</text><text x="983" y="416">未注圆角R2倒角</text>
          </g>

          <path d="M915 258L1010 203 1040 217V352L993 377 915 333Z" fill="#424245"/>
          <path d="M993 302L1040 278V352L993 377Z" fill="#3a3a3d"/>
          <path d="M915 258L1010 203 1040 217V278L993 302Z" fill="#47474a"/>
          <path d="M1000 253L1040 230V270L1008 266Z" fill="#38383a"/>
          <path d="M1005 272L1024 279 1015 286 1000 278Z" fill="#6a6a70"/>
          <path d="M928 283L980 305 978 358 930 330Z" fill="url(#cav)"/>
          <path d="M930 330L968 306 978 310 976 355Z" fill="#7a7a8a"/>
          <path d="M966 305L979 308 978 358 976 356Z" fill="#d0d0dc"/>
          <path d="M930 330L976 356" stroke="#a8a8b0" stroke-width="2"/>
          <circle cx="1033" cy="322" r="1.500" fill="#ddd"/>
        </svg>
      </div>
      <div class="blank"></div>
      <div class="hscroll"><b>‹</b><span class="track"><u></u></span><b>›</b></div>
    </section>

    <aside class="rrail">
      <span class="gear">⚙</span>
      <i class="tab"><svg><use href="#tabA"/></svg></i><i class="tab"><svg><use href="#tabB"/></svg></i><i class="tab"><svg><use href="#tabC"/></svg></i><i class="tab"><svg><use href="#tabD"/></svg></i>
      <i class="tab g9"><svg><use href="#tabE"/></svg></i><i class="tab g9 on"><svg><use href="#tabF"/></svg></i><i class="tab g9"><svg><use href="#tabG"/></svg></i><i class="tab"><svg><use href="#tabH"/></svg></i><i class="tab"><svg><use href="#tabI"/></svg></i><i class="tab"><svg><use href="#tabJ"/></svg></i><i class="tab"><svg><use href="#tabK"/></svg></i>
    </aside>
  </main>

  <div class="tb b1">
    <i class="t"><svg><use href="#dcube"/></svg></i><i class="t finish"><svg><use href="#grey"/></svg></i><span class="lbl grayl">完成草图</span>
    <i class="t"><svg><use href="#ws"/></svg></i><i class="t"><svg><use href="#line"/></svg></i><i class="t"><svg><use href="#arc"/></svg></i><i class="t"><svg><use href="#ringb"/></svg></i><i class="t fade"><svg><use href="#arc"/></svg></i><i class="t fade"><svg><use href="#arc"/></svg></i><i class="t"><svg><use href="#rect"/></svg></i><i class="t"><svg><use href="#spl"/></svg></i><i class="t"><svg><use href="#tcr"/></svg></i><i class="t fade"><svg><use href="#heartg"/></svg></i><i class="d"></i><i class="t fade"><svg><use href="#fork"/></svg></i><i class="sep"></i>
    <i class="t fade n5"><svg><use href="#cross"/></svg></i><i class="t fade"><svg><use href="#cross"/></svg></i><i class="t fade"><svg><use href="#cross"/></svg></i><i class="sep sn"></i><i class="t fade"><svg><use href="#grey"/></svg></i><i class="d"></i><i class="sep sn"></i>
    <i class="t fade"><svg><use href="#snap"/></svg></i><i class="t fade"><svg><use href="#book"/></svg></i><i class="t fade m5"><svg><use href="#cross"/></svg></i><i class="d"></i><i class="t fade n5"><svg><use href="#cross"/></svg></i><i class="t fade"><svg><use href="#grey"/></svg></i><i class="t fade"><svg><use href="#dcube"/></svg></i><i class="sep sn"></i><i class="t fade m5"><svg><use href="#copies"/></svg></i><i class="t fade"><svg><use href="#grey"/></svg></i><i class="t fade"><svg><use href="#grey"/></svg></i><i class="d"></i>
  </div>

  <div class="tb b2">
    <i class="t"><svg><use href="#lasb"/></svg></i><i class="t"><svg><use href="#xf"/></svg></i><i class="t"><svg><use href="#stack"/></svg></i><i class="t"><svg><use href="#larrow"/></svg></i><i class="t"><svg><use href="#rarrow"/></svg></i><i class="t"><svg><use href="#link"/></svg></i><i class="t"><svg><use href="#copies"/></svg></i><i class="t"><svg><use href="#stamp"/></svg></i><i class="t"><svg><use href="#scube"/></svg></i><i class="t"><svg><use href="#pcube"/></svg></i><i class="t"><svg><use href="#rcurve"/></svg></i><i class="t"><svg><use href="#torus"/></svg></i><i class="t"><svg><use href="#ped"/></svg></i><i class="t"><svg><use href="#olay"/></svg></i><i class="t"><svg><use href="#vy"/></svg></i><i class="t"><svg><use href="#bgb"/></svg></i><i class="t"><svg><use href="#rcube"/></svg></i><i class="t"><svg><use href="#tabJ"/></svg></i><i class="t"><svg><use href="#scube"/></svg></i><i class="t"><svg><use href="#scube"/></svg></i><i class="t"><svg><use href="#box"/></svg></i><i class="d"></i><i class="t m2"><svg><use href="#hex"/></svg></i><i class="d"></i><i class="t"><svg><use href="#axes"/></svg></i><i class="t"><svg><use href="#rgrid"/></svg></i><i class="t"><svg><use href="#psq"/></svg></i><i class="t"><svg><use href="#textic"/></svg></i><i class="t"><svg><use href="#dcube"/></svg></i><i class="t"><svg><use href="#spot"/></svg></i><i class="t"><svg><use href="#ringb"/></svg></i><i class="d"></i>
  </div>

  <footer class="status"><span class="st1"></span><span class="st2"></span></footer>
</div>
</body>
</html>
```

FILE: styles.css
```css
* { box-sizing: border-box; }
html, body { margin: 0; padding: 0; height: 720px; overflow: hidden; background: #000; }
.defs { display: none; }
.app {
  width: 853px; height: 714px; margin-left: 212px; display: flex; flex-direction: column;
  background: #dfdfdd; border-right: 2px solid #08203a; filter: blur(.45px);
  font-family: "Noto Sans CJK SC", "Liberation Sans", sans-serif; color: #222;
}
i, em, u, b { font-style: normal; text-decoration: none; font-weight: 400; }

.topbar { height: 8px; background: #0b0b0b; display: flex; justify-content: flex-end; gap: 2px; padding-right: 2px; overflow: hidden; flex: none; }
.brand { margin-right: 16px; color: #fff; font: 700 10.500px/1 "Liberation Sans", sans-serif; margin-top: -7px; }
.tbtn { width: 14px; height: 3px; background: #888; }

.menu { height: 14px; flex: none; display: flex; align-items: center; font-size: 9px; line-height: 14px; padding-left: 8px; background: #e3e5e3; white-space: nowrap; }
.mlogo { width: 11px; height: 11px; margin-right: 2px; }
.mi { flex: none; color: #333; }
.w35 { width: 35px; } .w37 { width: 37px; } .w38 { width: 38px; } .w39 { width: 40px; } .w42 { width: 42px; } .w45 { width: 45px; } .w47 { width: 47px; } .w61 { width: 61px; }
.winbtns { margin-left: auto; display: flex; gap: 2px; padding-right: 4px; }
.winbtns b { width: 13px; height: 11px; border: 1px solid #99a; background: #dde; font: 8px/9px "Liberation Sans", sans-serif; text-align: center; color: #556; }

.tb { display: flex; align-items: center; flex: none; white-space: nowrap; }
.r1 { height: 24px; padding-left: 11px; }
.r2 { height: 23px; padding-left: 8px; }
.r3 { height: 23px; padding-left: 6px; }
.t { flex: none; width: 21px; height: 21px; display: flex; align-items: center; justify-content: center; }
.t svg { width: 17px; height: 17px; }
.d { flex: none; width: 8px; height: 21px; position: relative; }
.d::after { content: ""; position: absolute; left: 3px; top: 12px; width: 2px; height: 2px; background: #222; }
.sep { flex: none; width: 1px; height: 18px; margin: 0 5px; background: #c8c8c6; }
.sep.sn { margin: 0 1px; }
.m1 { margin-left: 1px; } .m2 { margin-left: 2px; } .m3 { margin-left: 3px; } .m4 { margin-left: 4px; } .m5 { margin-left: 5px; } .m6 { margin-left: 6px; } .m8 { margin-left: 8px; }
.n3 { margin-left: -3px; } .n4 { margin-left: -4px; } .n5 { margin-left: -5px; }
.lbl { font-size: 9px; width: 18px; color: #333; flex: none; line-height: 14px; }
.search { flex: none; margin-left: 7px; width: 75px; height: 14px; background: #e6e6e8; border: 1px solid #ccc; font-size: 8px; line-height: 12px; padding-left: 2px; color: #888; display: flex; justify-content: space-between; }
.search em { color: #667; font-size: 11px; padding-right: 2px; }
.a { font: 700 16px/21px "Liberation Serif", serif; color: #222; }
.ming { font: 700 16px/21px "Noto Sans CJK SC", sans-serif; color: #1a20b8; margin-left: 3px; }

.sel { height: 20px; flex: none; display: flex; align-items: center; padding-left: 4px; border-top: 2px solid #c0c0be; background: #d8d8d6; position: relative; }
.dd { flex: none; height: 14px; background: #eceef0; display: flex; align-items: center; justify-content: space-between; font-size: 9px; padding-left: 1px; color: #333; }
.w80 { width: 81px; background: #e2e4e4; } .w86 { width: 86px; margin-left: 2px; background: #fff; }
.dd em { width: 12px; height: 11px; margin-right: 1px; background: #7f95c4; border: 1px solid #456; position: relative; }
.dd em::after { content: ""; position: absolute; left: 2px; top: 3px; border: 3px solid transparent; border-top: 4px solid #102050; }
.s { flex: none; width: 15px; height: 15px; display: flex; align-items: center; justify-content: center; }
.s svg { width: 14px; height: 14px; }
.endd { margin-left: auto; margin-right: 4px; width: 2px; height: 2px; background: #222; }

.main { height: 540px; flex: none; display: flex; }
.lrail { width: 32px; flex: none; background: #d8d8d6; display: flex; flex-direction: column; align-items: center; padding-top: 5px; border-left: 2px solid #f0f0f0; }
.l { width: 20px; height: 21px; flex: none; display: flex; align-items: center; justify-content: center; position: relative; }
.l svg { width: 18px; height: 18px; }
.l u { position: absolute; right: -6px; top: 9px; width: 2px; height: 2px; background: #222; }
.lrail hr, .mrail hr { width: 100%; height: 1px; border: 0; background: #c0c0be; margin: 2px 0; flex: none; }
.g4 { margin-top: 4px; } .g2 { margin-top: 3px; }
.more { margin: 0; height: 8px; width: 100%; flex: none; display: flex; justify-content: space-between; padding: 0 4px; font: 700 7px/8px "DejaVu Sans", sans-serif; color: #222; }

.view { flex: none; width: 387px; background: #2d2f2e; position: relative; overflow: hidden; }
.blurbox { position: absolute; left: 0; top: 1px; width: 132px; height: 28px; background: linear-gradient(90deg, #5e605f, #454746 70%, #2d2f2e); filter: blur(2px); }
.vline { position: absolute; left: 29px; top: 0; bottom: 0; width: 1px; background: #a8aaa8; }
.hline { position: absolute; left: 0; right: 0; top: 177px; height: 1px; background: #b8bab8; }
.dotmark { position: absolute; left: 9px; top: 158px; width: 40px; height: 40px; }
.wcs { position: absolute; left: 150px; top: 286px; width: 50px; height: 50px; }
.abs { position: absolute; left: 4px; top: 482px; width: 40px; height: 36px; }
.logo { position: absolute; left: 56px; top: 453px; width: 56px; height: 87px; margin: 0; background: #fff; display: flex; flex-direction: column; align-items: center; }
.logo svg { width: 56px; height: 60px; flex: none; }
.logo figcaption { display: flex; flex-direction: column; align-items: center; color: #222; }
.ln { font-size: 11px; line-height: 15px; transform: scaleY(1.25); transform-origin: top; }
.le { font: 4px/5px "Liberation Sans", sans-serif; margin-top: 3px; white-space: nowrap; }
.motto { position: absolute; margin: 0; color: #d0d2cf; font-size: 11.500px; line-height: 18px; white-space: nowrap; transform: scaleY(1.45); }
.m1l { left: 130px; top: 489px; }
.m2l { left: 215px; top: 514px; }

.mrail { width: 31px; flex: none; background: #d0d0ce; display: flex; flex-direction: column; align-items: center; padding: 4px 0 0 0; }
.grips { margin: 0; height: 5px; width: 22px; flex: none; border-top: 1px dotted #aaa; }
.g5 { margin-bottom: 5px; }

.browser { width: 382px; flex: none; background: #ededeb; display: flex; flex-direction: column; padding: 0 4px 3px 7px; }
.bhead { height: 22px; flex: none; display: flex; align-items: center; padding-left: 3px; gap: 6px; }
.chk { width: 9px; height: 9px; background: #fff; border: 1px solid #222; flex: none; }
.btitle { font: 700 9px/12px "Liberation Mono", "Noto Sans CJK SC", monospace; color: #222; }
.bnav { height: 20px; margin-bottom: 1px; flex: none; display: flex; align-items: center; gap: 5.500px; padding-left: 3px; }
.nb { width: 16px; height: 16px; flex: none; }
.url { width: 275px; margin-left: -3px; height: 14px; flex: none; background: #fff; border: 1px solid #bbb; font: 7px/12px "Liberation Mono", "Noto Sans CJK SC", monospace; padding-left: 2px; color: #223; overflow: hidden; white-space: nowrap; }
.btools { font-size: 9px; color: #333; white-space: nowrap; flex: none; }
.pic { height: 397px; flex: none; }
.pic svg { display: block; width: 371px; height: 396px; }
.blank { height: 85px; flex: none; background: #fff; }
.hscroll { height: 12px; flex: none; display: flex; align-items: center; background: #ececea; padding: 0 4px; font: 700 9px/12px "Liberation Mono", monospace; color: #444; }
.track { flex: none; width: 237px; height: 10px; margin: 0 32px; background: #c8cac8; position: relative; }
.track u { position: absolute; left: 115px; top: 1px; width: 7px; height: 8px; background: #e4e4e4; }
.hscroll b:last-child { margin-left: auto; }

.rrail { flex: 1; background: #aeb0ae; display: flex; flex-direction: column; align-items: center; padding-top: 1px; min-width: 0; }
.gear { height: 20px; flex: none; font: 12px/20px "DejaVu Sans", sans-serif; color: #333; margin-bottom: 10px; }
.tab { width: 18px; height: 26px; margin-bottom: 3px; flex: none; background: #d0d0ce; display: flex; align-items: center; justify-content: center; }
.tab svg { width: 15px; height: 18px; }
.tab.on { background: #eef0ee; height: 28px; }
.g9 { margin-top: 7px; }

.b1 { height: 23px; padding-left: 8px; }
.b2 { height: 23px; padding-left: 10px; }
.finish { background: #a8aeb0; width: 16px; height: 16px; margin-left: 3px; }
.finish svg { width: 14px; height: 14px; }
.grayl { width: 34px; color: #a8a8a8; margin-left: 2px; font-size: 8.500px; margin-right: 3px; }
.fade { opacity: .55; }
.status { height: 16px; flex: none; display: flex; justify-content: flex-end; align-items: center; padding-right: 49px; background: #e0e0de; border-top: 1px solid #cfcfcd; }
.st1 { width: 11px; height: 11px; background: #a4a6a4; }
.st2 { width: 11px; height: 11px; background: #d0d8e4; border: 2px solid #7f95c4; margin-left: 2px; }
```
